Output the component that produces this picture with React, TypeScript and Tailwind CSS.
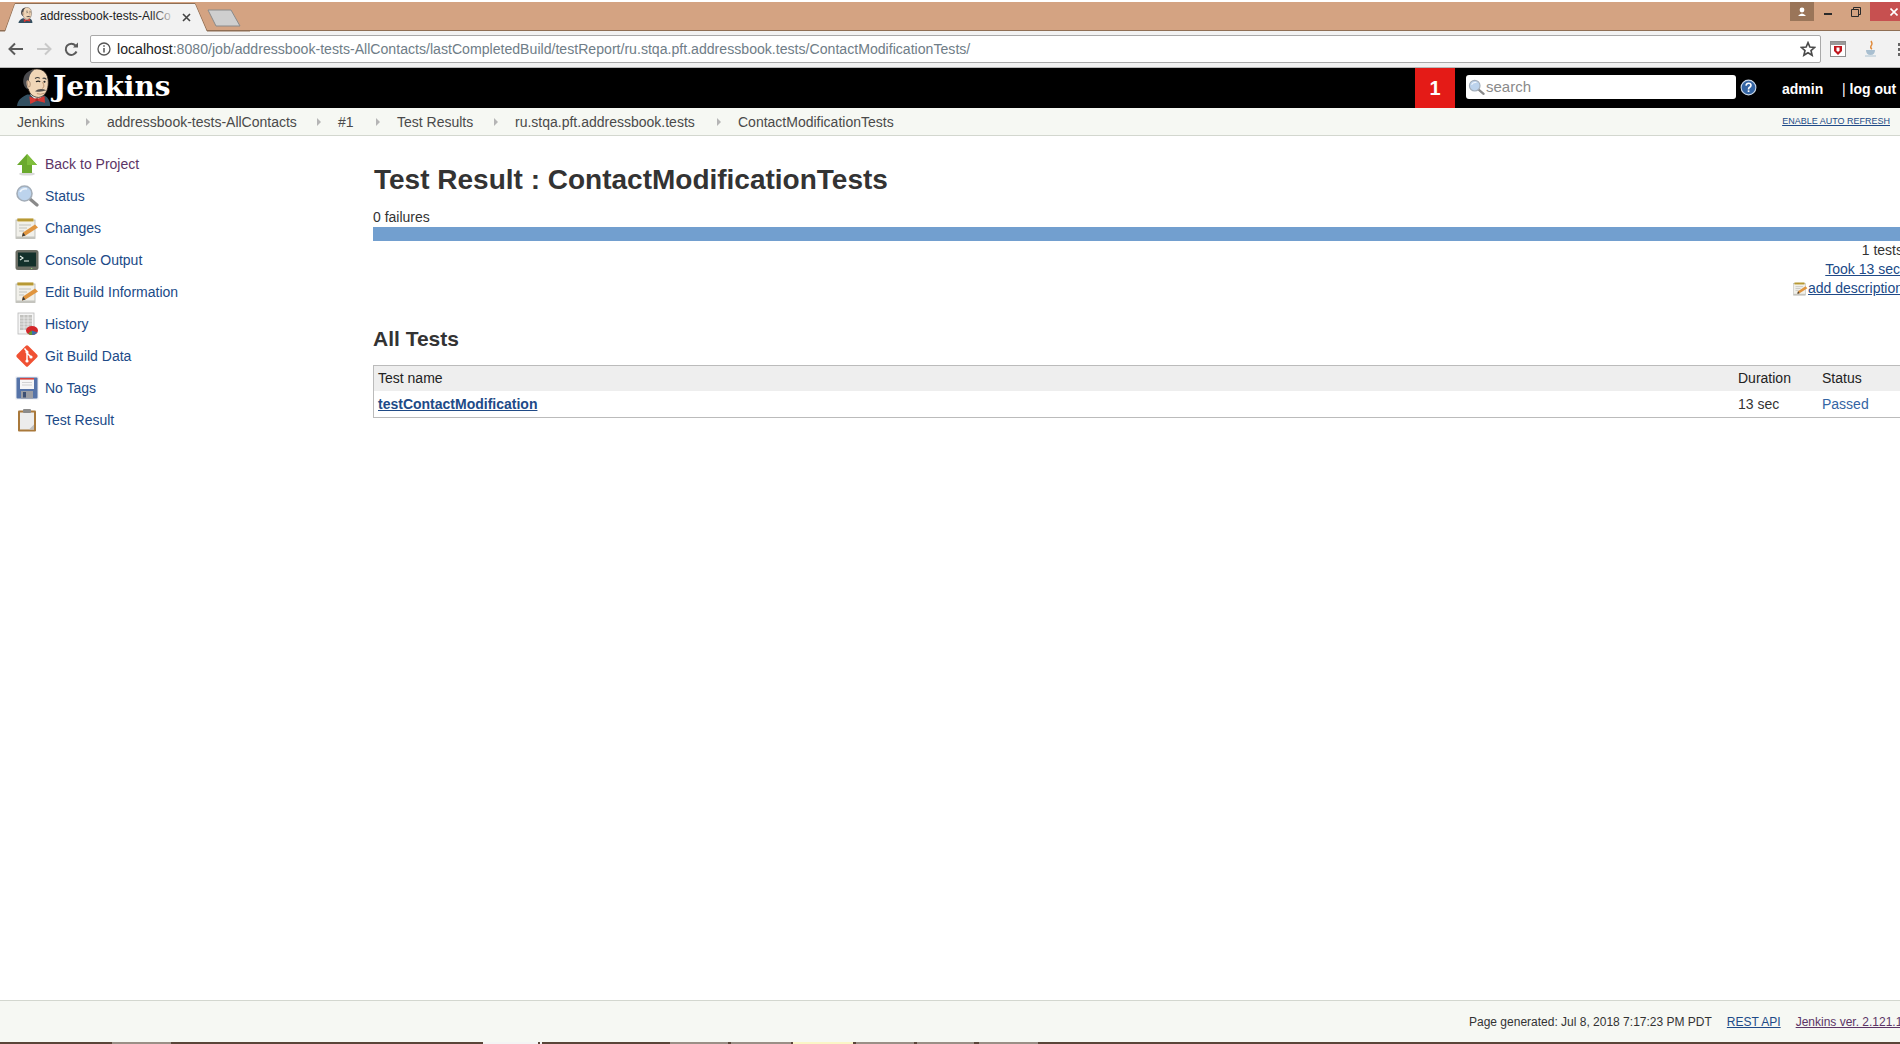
import type { ReactNode } from "react";

const FONT = "font-['Liberation_Sans',Arial,sans-serif]";

function JenkinsHead({ size = 40 }: { size?: number }) {
  return (
    <svg width={size} height={size} viewBox="0 0 40 40">
      {/* jacket */}
      <path d="M1 40 C2 33 7 30 12 28 L30 29 C34 31 36 35 36 40 Z" fill="#335061" />
      <path d="M15 28 L22 35 L29 29 L26 27 L17 26 Z" fill="#f1f1ee" />
      {/* head */}
      <path d="M10 14 C10 6 15 1 22 1 C29 1 34 6 34 15 C34 23 31 30 24 31 C18 31 14 27 13 22 C10 21 9 17 10 14 Z" fill="#f0d6b7" stroke="#2a211c" strokeWidth="0.8" />
      {/* hair */}
      <path d="M13 23 C8 21 6 14 9 8 C11 4 15 2 19 2 C15 5 13.5 9 13.5 14 C12.5 12 11 12.5 11 15 C11 18 12 21 13 23 Z" fill="#4a4a4d" />
      <path d="M11.5 14 C13 12.5 15 14 15 17 C15 20 13.5 21 12.5 19.5 Z" fill="#e8c6a4" stroke="#6e5240" strokeWidth="0.5" />
      {/* brows, eyes, nose, moustache */}
      <path d="M20 11 Q23 9 25 11 M28 11 Q30 10 32 12" stroke="#3d3d3d" strokeWidth="1.1" fill="none" />
      <path d="M21 14.5 Q23.5 13 25.5 14.5" stroke="#222" strokeWidth="1.2" fill="none" />
      <circle cx="30" cy="14.5" r="1.1" fill="#222" />
      <path d="M28 15 Q31 20 27.5 21.5" stroke="#b98f6c" strokeWidth="1" fill="none" />
      <path d="M20 24.5 Q25 20.5 32 23.5 Q26 26 20 24.5 Z" fill="#55504d" />
      <path d="M22 27 Q26 28.5 30 26.5" stroke="#a87c5c" strokeWidth="0.8" fill="none" />
      {/* bow tie */}
      <path d="M14 30 L22 33 L30 29.5 L30.5 36.5 L22 34.5 L15 38 Z" fill="#d33833" />
      <rect x="20.5" y="31.8" width="3" height="3" fill="#a92622" />
    </svg>
  );
}

function ArrowUpIcon() {
  return (
    <svg width="24" height="24" viewBox="0 0 24 24">
      <ellipse cx="12" cy="22" rx="8" ry="1.6" fill="#d9d9d9" />
      <path d="M12 2 L22 13 L17 13 L17 21 L7 21 L7 13 L2 13 Z" fill="#6aa92d" />
      <path d="M12 2 L22 13 L12 13 Z" fill="#7fbe3c" />
    </svg>
  );
}

function SearchIcon({ size = 24 }: { size?: number }) {
  return (
    <svg width={size} height={size} viewBox="0 0 24 24">
      <path d="M15 15 L22 21" stroke="#8a8a8a" strokeWidth="3.2" strokeLinecap="round" />
      <circle cx="9.5" cy="9.5" r="7.5" fill="#bcd3ec" stroke="#a3adb8" strokeWidth="1.6" />
      <path d="M5 8 Q7 4 12 5" stroke="#eef5fc" strokeWidth="1.6" fill="none" />
    </svg>
  );
}

function NotepadIcon({ size = 24 }: { size?: number }) {
  return (
    <svg width={size} height={size} viewBox="0 0 24 24">
      <rect x="1" y="4" width="19" height="18.5" fill="#f1f0ea" stroke="#b4b4ae" strokeWidth="0.8" />
      <rect x="1" y="20.5" width="19" height="2.5" fill="#c4c4be" />
      <rect x="2.5" y="2.5" width="16" height="3" fill="#c9a83c" />
      <path d="M3 2.5 V5 M5 2.5 V5 M7 2.5 V5 M9 2.5 V5 M11 2.5 V5 M13 2.5 V5 M15 2.5 V5 M17 2.5 V5" stroke="#8f7622" strokeWidth="0.6" />
      <path d="M4 9 H16 M4 12 H12 M4 15 H9" stroke="#c2c2bc" strokeWidth="1.2" />
      <path d="M8 16.5 L20 8.5 L23 11.5 L10.5 19.5 L7 20.5 Z" fill="#e0953f" />
      <path d="M8 16.5 L7 20.5 L10.5 19.5 Z" fill="#3a3a3a" />
    </svg>
  );
}

function ConsoleIcon() {
  return (
    <svg width="24" height="24" viewBox="0 0 24 24">
      <rect x="0.5" y="2" width="23" height="20" rx="2.5" fill="#6b6d63" />
      <rect x="3" y="4.5" width="18" height="14" fill="#13302a" />
      <path d="M5 8 L8 10 L5 12 M9 13 H14" stroke="#e9f2ea" strokeWidth="1.1" fill="none" />
      <rect x="16" y="20" width="1.2" height="1" fill="#8ed16f" />
    </svg>
  );
}

function HistoryIcon() {
  return (
    <svg width="24" height="24" viewBox="0 0 24 24">
      <rect x="3" y="1" width="16" height="21" fill="#f5f5f5" stroke="#b9b9b9" strokeWidth="0.8" />
      <path d="M5 3 H17 V18 H5 Z" fill="#c2c2bf" />
      <path d="M5 6 H17 M5 9 H17 M5 12 H17 M5 15 H17 M9 3 V18 M13 3 V18" stroke="#f2f2f2" strokeWidth="0.7" />
      <ellipse cx="17" cy="18.5" rx="6" ry="4.5" fill="#d3272a" />
      <path d="M17 18.5 L13 21.5 Q15 23 17 23 Z" fill="#5d9a35" />
      <path d="M17 18.5 L17 23 Q20 23 22.5 20.5 Z" fill="#3d6fa8" />
    </svg>
  );
}

function GitIcon() {
  return (
    <svg width="24" height="24" viewBox="0 0 24 24">
      <rect x="4" y="4" width="16" height="16" rx="1.6" transform="rotate(45 12 12)" fill="#f05133" />
      <path d="M9.5 4.5 L12 7.5 L12 17 M12 9 L16 13" stroke="#fff" strokeWidth="1.5" fill="none" />
      <circle cx="12" cy="8" r="1.6" fill="#fff" />
      <circle cx="12" cy="17" r="1.6" fill="#fff" />
      <circle cx="16" cy="13" r="1.6" fill="#fff" />
    </svg>
  );
}

function SaveIcon() {
  return (
    <svg width="24" height="24" viewBox="0 0 24 24">
      <rect x="0.5" y="0.5" width="23" height="23" fill="#e9ecf1" />
      <rect x="1.5" y="1.5" width="21" height="21" rx="1" fill="#5573a8" />
      <rect x="5" y="2" width="14" height="11" fill="#f6f6f6" />
      <rect x="5" y="2" width="14" height="1.6" fill="#d8413c" />
      <path d="M7 6.5 H17 M7 9 H17" stroke="#c9c9c9" strokeWidth="0.8" />
      <rect x="6" y="15" width="12" height="7.5" fill="#9a9ca3" />
      <rect x="8" y="16" width="3" height="5.5" fill="#3d4f73" />
    </svg>
  );
}

function ClipboardIcon() {
  return (
    <svg width="24" height="24" viewBox="0 0 24 24">
      <rect x="3" y="2.5" width="18" height="21" rx="1" fill="#a9793b" />
      <rect x="5" y="4.5" width="14" height="17" fill="#ececec" />
      <path d="M14 21.5 L19 16.5 L19 21.5 Z" fill="#bdbdbd" />
      <rect x="8" y="1" width="8" height="4" rx="1" fill="#8b8b8b" />
    </svg>
  );
}

const sideItems: { label: string; icon: ReactNode; visited?: boolean }[] = [
  { label: "Back to Project", icon: <ArrowUpIcon />, visited: true },
  { label: "Status", icon: <SearchIcon /> },
  { label: "Changes", icon: <NotepadIcon /> },
  { label: "Console Output", icon: <ConsoleIcon /> },
  { label: "Edit Build Information", icon: <NotepadIcon /> },
  { label: "History", icon: <HistoryIcon /> },
  { label: "Git Build Data", icon: <GitIcon /> },
  { label: "No Tags", icon: <SaveIcon /> },
  { label: "Test Result", icon: <ClipboardIcon /> },
];

const crumbs = [
  { label: "Jenkins", width: "w-[90px]" },
  { label: "addressbook-tests-AllContacts", width: "w-[231px]" },
  { label: "#1", width: "w-[59px]" },
  { label: "Test Results", width: "w-[118px]" },
  { label: "ru.stqa.pft.addressbook.tests", width: "w-[223px]" },
];

// what shows of the desktop taskbar below the browser window
const taskbar = [
  "ml-[112px] w-[59px] bg-[#9a8f86]",
  "ml-[312px] w-[55px] bg-[#f4f4f4]",
  "ml-[2px] w-[2px] bg-[#f4f4f4]",
  "ml-[128px] w-[58px] bg-[#9a8f86]",
  "ml-[3px] w-[60px] bg-[#9a8f86]",
  "ml-[2px] w-[60px] bg-[#fbf6c6]",
  "ml-[3px] w-[58px] bg-[#9a8f86]",
  "ml-[3px] w-[57px] bg-[#9a8f86]",
  "ml-[5px] w-[59px] bg-[#9a8f86]",
];

function BrowserChrome() {
  return (
    <div className="h-[68px] shrink-0 bg-[#f2f2f2]">
      {/* title bar */}
      <div className="relative flex h-[31px] items-start justify-end border-b border-[#8f6f55] border-t-2 border-t-white bg-[#d4a382]">
        <svg className="absolute left-0 top-0" width="250" height="30" viewBox="0 0 250 30">
          <path d="M0 29 L5 29 L15 1.5 L195 1.5 L207 29 L250 29" fill="none" stroke="#8f6f55" strokeWidth="1" />
          <path d="M5 30 L15 2 L195 2 L207 30 Z" fill="#f2f2f2" />
          <path d="M208 8 L231 8 L240 24 L216 24 Z" fill="#cfcfcf" stroke="#8a8a8a" strokeWidth="1" />
        </svg>
        <div className="absolute left-[18px] top-[5px]">
          <JenkinsHead size={16} />
        </div>
        <div className="absolute left-[40px] top-[6px] w-[136px] overflow-hidden whitespace-nowrap text-[12px] leading-[16px] text-[#222]">
          addressbook-tests-AllCo
          <div className="absolute right-0 top-0 h-full w-[24px] bg-gradient-to-r from-transparent to-[#f2f2f2]" />
        </div>
        <svg className="absolute left-[182px] top-[11px]" width="9" height="9" viewBox="0 0 9 9">
          <path d="M1 1 L8 8 M8 1 L1 8" stroke="#444" strokeWidth="1.6" />
        </svg>
        {/* window buttons */}
        <div className="flex h-[19px] items-center justify-center">
          <div className="flex h-[19px] w-[24px] items-center justify-center bg-[#9a7559]">
            <svg width="10" height="10" viewBox="0 0 10 10">
              <circle cx="5" cy="3" r="2.4" fill="#fff" />
              <path d="M1 9 Q5 4 9 9 Z" fill="#fff" />
            </svg>
          </div>
          <div className="flex h-[19px] w-[28px] items-center justify-center">
            <div className="mt-[5px] h-[2px] w-[8px] bg-[#2a2a2a]" />
          </div>
          <div className="flex h-[19px] w-[28px] items-center justify-center">
            <svg width="10" height="10" viewBox="0 0 10 10">
              <path d="M0.5 2.5 H7.5 V9.5 H0.5 Z M2.5 2.5 V0.5 H9.5 V7.5 H7.5" fill="none" stroke="#2a2a2a" />
            </svg>
          </div>
          <div className="flex h-[19px] w-[30px] items-center justify-end bg-[#c75050] pr-[2px]">
            <svg width="8" height="8" viewBox="0 0 8 8">
              <path d="M0.5 0.5 L7.5 7.5 M7.5 0.5 L0.5 7.5" stroke="#fff" strokeWidth="1.6" />
            </svg>
          </div>
        </div>
      </div>
      {/* toolbar */}
      <div className="flex h-[37px] items-center border-b border-[#b8b8b8]">
        <div className="flex w-[90px] shrink-0 items-center pl-[8px]">
          <svg width="16" height="14" viewBox="0 0 16 14">
            <path d="M15 7 H2 M7 1.5 L1.5 7 L7 12.5" stroke="#5a5a5a" strokeWidth="2" fill="none" />
          </svg>
          <svg className="ml-[12px]" width="16" height="14" viewBox="0 0 16 14">
            <path d="M1 7 H14 M9 1.5 L14.5 7 L9 12.5" stroke="#c9c9c9" strokeWidth="2" fill="none" />
          </svg>
          <svg className="ml-[12px]" width="15" height="15" viewBox="0 0 15 15">
            <path d="M12.5 9.5 A5.6 5.6 0 1 1 11.5 3.5" stroke="#5a5a5a" strokeWidth="2" fill="none" />
            <path d="M9 5.5 H14 V0.5 Z" fill="#5a5a5a" />
          </svg>
        </div>
        <div className="flex h-[28px] w-[1731px] shrink-0 items-center rounded-[2px] border border-[#a9a9a9] bg-white pl-[6px]">
          <svg width="14" height="14" viewBox="0 0 14 14">
            <circle cx="7" cy="7" r="6" fill="none" stroke="#555" strokeWidth="1.3" />
            <path d="M7 6 V10.5 M7 3.2 V4.8" stroke="#555" strokeWidth="1.5" />
          </svg>
          <div className="ml-[6px] whitespace-nowrap text-[14.12px] leading-[20px] text-[#6f7d87]">
            <span className="text-[#222]">localhost</span>
            :8080/job/addressbook-tests-AllContacts/lastCompletedBuild/testReport/ru.stqa.pft.addressbook.tests/ContactModificationTests/
          </div>
          <svg className="ml-auto mr-[4px]" width="16" height="16" viewBox="0 0 24 24">
            <path d="M12 2.5 L14.8 9 L22 9.6 L16.5 14.3 L18.2 21.4 L12 17.6 L5.8 21.4 L7.5 14.3 L2 9.6 L9.2 9 Z" fill="none" stroke="#4a4a4a" strokeWidth="2.4" />
          </svg>
        </div>
        <div className="ml-[9px] h-[16px] w-[16px] shrink-0 border border-[#8e8e8e] bg-white">
          <div className="h-[3px] bg-[#9a9a9a]" />
          <svg width="14" height="11" viewBox="0 0 14 11">
            <path d="M3 1 H11 V6 L7 10 L3 6 Z" fill="#c0151c" />
            <path d="M5.5 2.5 H8.5 V5.5 L7 7 L5.5 5.5 Z" fill="#fff" />
          </svg>
        </div>
        <svg className="ml-[18px] shrink-0" width="14" height="18" viewBox="0 0 14 18">
          <path d="M7 1 Q9 4 7 6 Q6 8 8 9" stroke="#e08a3a" strokeWidth="1.4" fill="none" />
          <path d="M2 10 H11 Q11 15 6.5 15 Q2 15 2 10 Z" fill="#a9bfd0" />
          <path d="M1 16 H12" stroke="#c5d3dd" strokeWidth="1.5" />
        </svg>
        <div className="ml-[20px] flex shrink-0 flex-col gap-[2px]">
          <div className="h-[3px] w-[2px] bg-[#666]" />
          <div className="h-[3px] w-[2px] bg-[#666]" />
          <div className="h-[3px] w-[2px] bg-[#666]" />
        </div>
      </div>
    </div>
  );
}

function JenkinsHeader() {
  return (
    <div className="flex h-[40px] shrink-0 items-center bg-black">
      <div className="ml-[16px] h-[40px] w-[36px] shrink-0 overflow-hidden">
        <JenkinsHead size={38} />
      </div>
      <div className="ml-[1px] mb-[2px] font-['DejaVu_Serif',Georgia,serif] text-[28px] font-bold leading-[36px] text-white">
        Jenkins
      </div>
      <div className="ml-auto flex h-[40px] w-[40px] items-center justify-center bg-[#e41b17] text-[20px] font-bold text-white">
        1
      </div>
      <div className="ml-[11px] mb-[2px] flex h-[24px] w-[270px] items-center rounded-[3px] bg-white pl-[2px] text-[15px] text-[#8a8a8a]">
        <SearchIcon size={17} />
        <span className="ml-[1px]">search</span>
      </div>
      <svg className="ml-[4px] mb-[2px]" width="17" height="17" viewBox="0 0 15 15">
        <circle cx="7.5" cy="7.5" r="6.5" fill="#3465a4" stroke="#c9d7e8" strokeWidth="1" />
        <path d="M5.3 5.8 Q5.6 3.7 7.6 3.7 Q9.7 3.7 9.7 5.6 Q9.7 6.8 8.3 7.5 Q7.5 8 7.5 9.2" stroke="#fff" strokeWidth="1.4" fill="none" />
        <rect x="6.8" y="10" width="1.5" height="1.5" fill="#fff" />
      </svg>
      <div className="ml-[25px] mt-[2px] w-[60px] shrink-0 text-[14px] font-bold text-white">admin</div>
      <div className="mt-[2px] w-[58px] shrink-0 whitespace-nowrap text-[14px] font-bold text-white">
        <span className="font-normal">|</span> log out
      </div>
    </div>
  );
}

function Breadcrumbs() {
  return (
    <div className="flex h-[28px] shrink-0 items-center border-b border-[#d3d7cf] bg-[#f6f8f3] pl-[17px] pt-[1px] text-[14px] text-[#4a4a4a]">
      {crumbs.map((c) => (
        <div key={c.label} className={`flex shrink-0 items-center whitespace-nowrap ${c.width}`}>
          <span>{c.label}</span>
          <span className="ml-auto mr-[17px] h-0 w-0 border-y-[4px] border-l-[4px] border-y-transparent border-l-[#b5b5b5]" />
        </div>
      ))}
      <span className="whitespace-nowrap">ContactModificationTests</span>
      <a className="ml-auto mr-[10px] text-[9px] text-[#204a87] underline">ENABLE AUTO REFRESH</a>
    </div>
  );
}

function Sidebar() {
  return (
    <div className="w-[373px] shrink-0 pl-[15px] pt-[12px]">
      {sideItems.map((item) => (
        <div key={item.label} className="flex h-[32px] items-center">
          <div className="flex w-[30px] shrink-0 items-center">{item.icon}</div>
          <a className={`text-[14px] ${item.visited ? "text-[#5c3566]" : "text-[#204a87]"}`}>{item.label}</a>
        </div>
      ))}
    </div>
  );
}

function TestResult() {
  return (
    <div className="w-[1532px] shrink-0 text-[14px] text-[#333]">
      <h1 className="ml-[1px] mt-[23px] h-[42px] text-[28px] font-bold leading-[42px]">
        Test Result : ContactModificationTests
      </h1>
      <div className="mt-[8px] h-[16px] leading-[16px]">0 failures</div>
      <div className="mt-[2px] h-[14px] bg-[#729fcf]" />
      <div className="flex flex-col items-end leading-[19px]">
        <div className="mr-[2px]">1 tests</div>
        <a className="mr-[5px] text-[#204a87] underline">Took 13 sec</a>
        <div className="mr-[2px] flex items-center">
          <NotepadIcon size={15} />
          <a className="text-[#204a87] underline">add description</a>
        </div>
      </div>
      <h2 className="mt-[27px] h-[28px] text-[21px] font-bold leading-[28px]">All Tests</h2>
      <div className="mt-[12px] border border-[#bbb]">
        <div className="flex h-[25px] items-center bg-[#eee] pl-[4px] text-[#222]">
          <div className="flex-1">Test name</div>
          <div className="w-[84px]">Duration</div>
          <div className="w-[82px]">Status</div>
        </div>
        <div className="flex h-[26px] items-center pl-[4px]">
          <a className="flex-1 font-bold text-[#204a87] underline">testContactModification</a>
          <div className="w-[84px]">13 sec</div>
          <div className="w-[82px] text-[#3465a4]">Passed</div>
        </div>
      </div>
    </div>
  );
}

export default function App() {
  return (
    <div className={`flex h-[1044px] w-[1900px] flex-col overflow-hidden bg-white ${FONT}`}>
      <BrowserChrome />
      <JenkinsHeader />
      <Breadcrumbs />
      <div className="flex flex-1">
        <Sidebar />
        <TestResult />
      </div>
      <div className="flex h-[42px] shrink-0 items-center border-t border-[#d3d7cf] bg-[#f6f8f3] text-[12px] text-[#333]">
        <span className="ml-[1469px] whitespace-nowrap">Page generated: Jul 8, 2018 7:17:23 PM PDT</span>
        <a className="ml-[15px] whitespace-nowrap text-[#204a87] underline">REST API</a>
        <a className="ml-[15px] whitespace-nowrap text-[#5c3566] underline">Jenkins ver. 2.121.1</a>
      </div>
      <div className="flex h-[2px] shrink-0 bg-[#5a4538]">
        {taskbar.map((seg) => (
          <div key={seg} className={`h-[2px] ${seg}`} />
        ))}
      </div>
    </div>
  );
}
